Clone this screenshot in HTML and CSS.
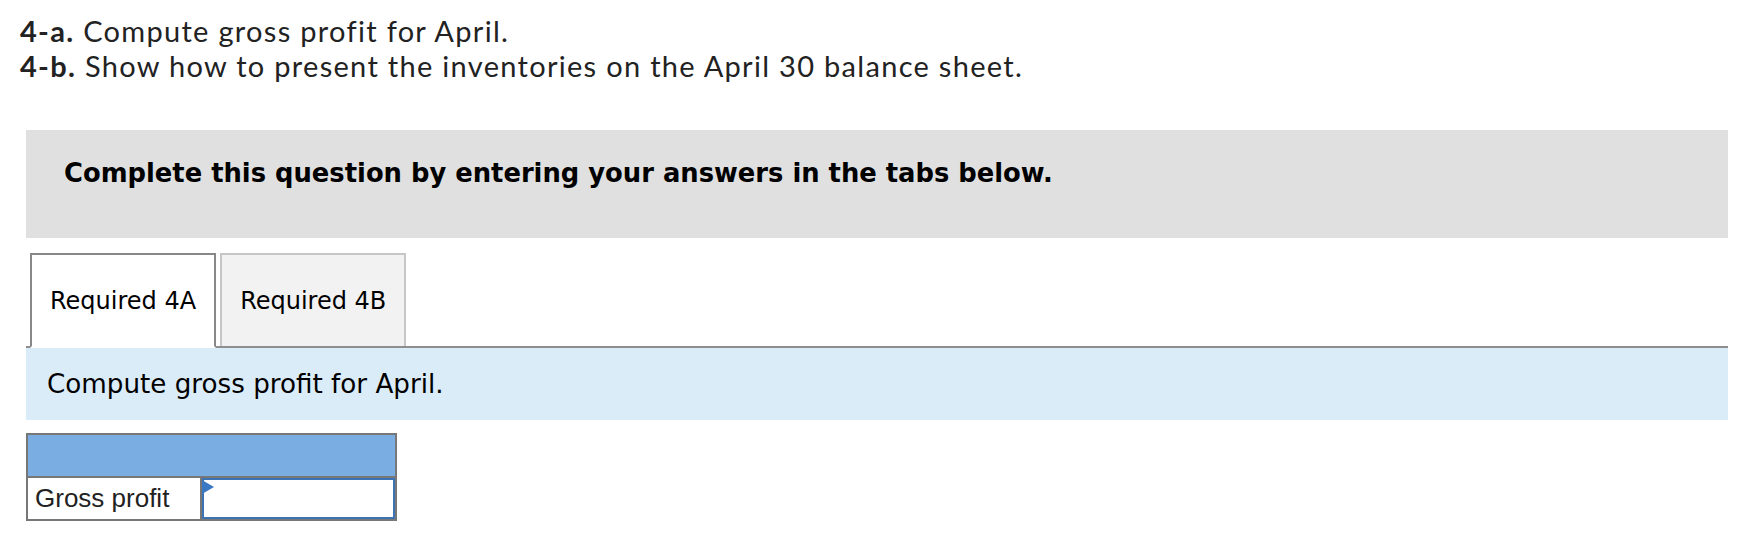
FILE: index.html
```html
<!DOCTYPE html>
<html lang="en">
<head>
    <meta charset="UTF-8">
    <meta name="viewport" content="width=device-width, initial-scale=1.0">
    <title>Gross profit question</title>
    <link rel="stylesheet" href="styles.css">
</head>
<body>
    <div class="question">
        <p><b>4-a.</b> Compute gross profit for April.</p>
        <p><b>4-b.</b> Show how to present the inventories on the April 30 balance sheet.</p>
    </div>

    <div class="work-area">
        <div class="instructions">Complete this question by entering your answers in the tabs below.</div>

        <div class="tabs">
            <button type="button" class="tab active">Required 4A</button>
            <button type="button" class="tab">Required 4B</button>
        </div>

        <div class="tab-prompt">Compute gross profit for April.</div>

        <div class="answer-table">
            <div class="answer-head"></div>
            <div class="answer-row">
                <div class="answer-label">Gross profit</div>
                <div class="answer-cell">
                    <input type="text" class="answer-input" value="">
                </div>
            </div>
        </div>
    </div>
</body>
</html>
```

FILE: styles.css
```css
*, *::after, *::before {
    box-sizing: border-box;
}

body {
    margin: 0;
    padding: 0;
    background-color: #fff;
    color: #000;
}

.question {
    padding: 13px 0 0 20px;
    font-family: Lato, 'Open Sans', sans-serif;
    font-size: 29px;
    line-height: 35px;
    letter-spacing: 1.3px;
    color: #222;
}
.question p {
    margin: 0;
}
.question b {
    font-weight: 700;
}

.work-area {
    margin: 47px 24px 0 26px;
}

.instructions {
    background-color: #e0e0e0;
    height: 108px;
    padding: 26px 38px 0 38px;
    font-family: 'DejaVu Sans', Verdana, sans-serif;
    font-weight: 700;
    font-size: 25.8px;
    line-height: 34px;
}

.tabs {
    display: flex;
    align-items: flex-end;
    gap: 4px;
    margin-top: 15px;
    padding-left: 4px;
    border-bottom: 2px solid #8e8e8e;
}
.tab {
    height: 93px;
    padding: 0 18px;
    font-family: 'DejaVu Sans', Verdana, sans-serif;
    font-size: 24px;
    color: #000;
    background-color: #f2f2f2;
    border: 2px solid #c6c6c6;
    border-bottom: none;
    border-radius: 0;
}
.tab.active {
    height: 95px;
    margin-bottom: -2px;
    background-color: #fff;
    border-color: #888;
    border-bottom: 2px solid #fff;
}

.tab-prompt {
    background-color: #dbecf9;
    padding: 20px 21px;
    font-family: 'DejaVu Sans', Verdana, sans-serif;
    font-size: 26.2px;
    line-height: 32px;
}

.answer-table {
    width: 371px;
    margin-top: 13px;
    border: 2px solid #777;
}
.answer-head {
    height: 43px;
    background-color: #7aaee2;
    border-bottom: 2px solid #777;
}
.answer-row {
    display: flex;
    height: 41px;
}
.answer-label {
    width: 174px;
    padding-left: 7px;
    border-right: 2px solid #777;
    font-family: 'Liberation Sans', Arial, sans-serif;
    font-size: 26px;
    line-height: 41px;
    color: #222;
}
.answer-cell {
    position: relative;
    flex: 1;
}
.answer-cell::before {
    content: '';
    position: absolute;
    top: 2px;
    left: 0;
    border-top: 7px solid transparent;
    border-bottom: 7px solid transparent;
    border-left: 12px solid #3b78c4;
}
.answer-input {
    display: block;
    width: 100%;
    height: 100%;
    margin: 0;
    border: 2px solid #3b73b4;
    background: #fff;
    outline: none;
}
```
